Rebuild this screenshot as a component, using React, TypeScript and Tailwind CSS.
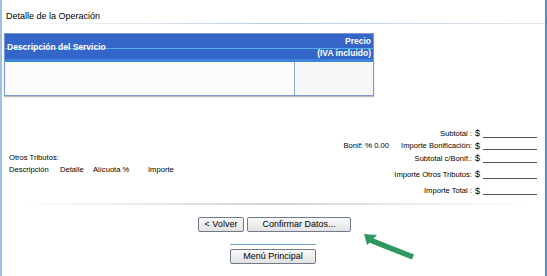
const font = { fontFamily: '"Liberation Sans", Arial, sans-serif' };

const TotalRow = ({ label, h, extra }: { label: string; h: string; extra?: React.ReactNode }) => (
  <div className={`flex items-center justify-end ${h}`}>
    {extra}
    <span>{label}</span>
    <span className="ml-[3px] text-[9px] leading-none">$</span>
    <span className="ml-[3px] mt-[7px] w-[54px] h-px bg-[#555]" />
  </div>
);

const Button = ({ children, className = "" }: { children: React.ReactNode; className?: string }) => (
  <button
    className={`h-[15px] border border-[#6f7b8b] rounded-[2px] bg-gradient-to-b from-[#fafafa] to-[#e2e2e2] text-[9px] leading-none text-black ${className}`}
  >
    {children}
  </button>
);

export default function App() {
  return (
    <div
      className="relative w-[547px] h-[276px] bg-white border-l-2 border-[#9fc0e4] border-r-2 border-r-[#4a8edb] overflow-hidden text-black"
      style={font}
    >
      {/* Título */}
      <div className="pt-[11px] pl-[4px] text-[9px] leading-[11px]">Detalle de la Operación</div>
      <div className="mt-[1px] h-px bg-gradient-to-r from-transparent via-[#b8cde0] to-[#dde6ee]" />

      {/* Tabla */}
      <div className="ml-[2px] mt-[9px] w-[370px] border border-[#7b98d2] shadow-[0_1px_1px_#bbb]">
        <div className="relative h-[28px] bg-[#3465c9] text-white font-bold text-[8.5px] leading-none">
          <div className="absolute left-0 right-0 top-[14px] h-px bg-[#4fb3e3]" />
          <div className="absolute left-0 right-0 bottom-0 h-[3px] bg-[#3d86dc]" />
          <div className="relative flex h-full">
            <div className="flex-1 flex items-center pl-[2px] pb-[1px]">Descripción del Servicio</div>
            <div className="w-[78px] flex flex-col items-end justify-center gap-[3px] pr-[2px] pb-[2px]">
              <span>Precio</span>
              <span>(IVA incluido)</span>
            </div>
          </div>
        </div>
        <div className="flex h-[33px]">
          <div className="flex-1 bg-[#fbfbfb] border-r border-[#8aa6d8]" />
          <div className="w-[78px] bg-[#f7f7f7]" />
        </div>
      </div>

      {/* Totales */}
      <div className="mt-[31px] flex text-[7.6px] leading-none">
        <div className="pl-[7px] pt-[27px] w-[300px]">
          <div>Otros Tributos:</div>
          <div className="mt-[4px] flex">
            <span className="w-[51px]">Descripción</span>
            <span className="w-[33px]">Detalle</span>
            <span className="w-[55px]">Alícuota %</span>
            <span>Importe</span>
          </div>
        </div>
        <div className="flex-1 pr-[8px]">
          <TotalRow label="Subtotal :" h="h-[13px]" />
          <TotalRow
            label="Importe Bonificación:"
            h="h-[12px]"
            extra={<span className="mr-[12px]">Bonif: <span className="text-[8px]">%</span> 0.00</span>}
          />
          <TotalRow label="Subtotal c/Bonif.:" h="h-[13px]" />
          <TotalRow label="Importe Otros Tributos:" h="h-[19px]" />
          <TotalRow label="Importe Total :" h="h-[14px]" />
        </div>
      </div>

      <div className="mt-[5px] mx-[18px] h-[2px] bg-gradient-to-r from-transparent via-[#d4d4d4] to-transparent" />

      {/* Botones */}
      <div className="mt-[12px] flex justify-center gap-[3px] pl-[2px]">
        <Button className="w-[46px]">&lt; Volver</Button>
        <Button className="w-[104px]">Confirmar Datos...</Button>
      </div>
      <div className="mt-[12px] flex flex-col items-center pr-[1px]">
        <div className="w-[86px] h-px bg-[#6ea3d8]" />
        <Button className="mt-[4px] w-[86px]">Menú Principal</Button>
      </div>

      {/* Flecha */}
      <svg className="absolute left-[353px] top-[226px]" width="62" height="36" viewBox="0 0 62 36">
        <line x1="15" y1="14" x2="58" y2="31" stroke="#2d9960" strokeWidth="5.5" />
        <polygon points="9,8 22,9 12,19" fill="#2d9960" />
      </svg>
    </div>
  );
}
